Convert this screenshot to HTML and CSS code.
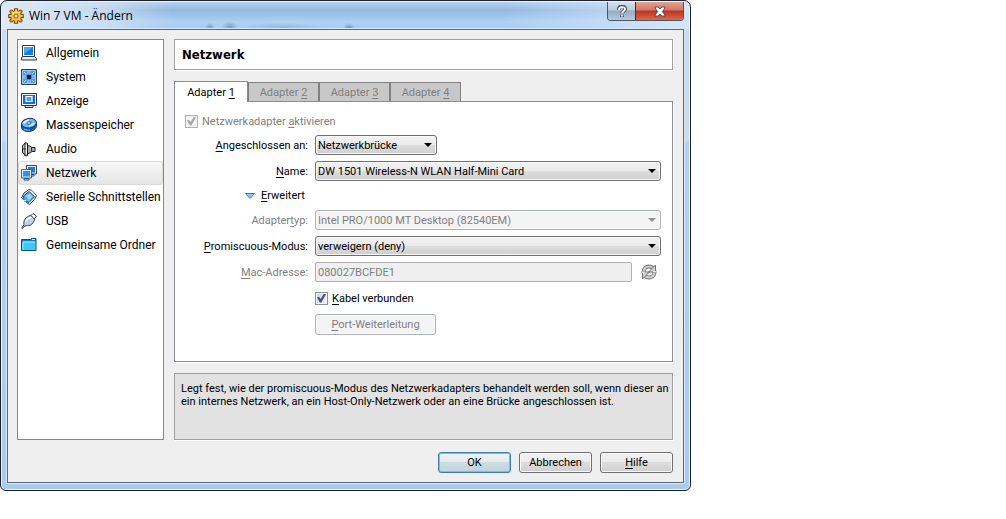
FILE: index.html
```html
<!DOCTYPE html>
<html lang="de">
<head>
<meta charset="utf-8">
<title>Win 7 VM - Ändern</title>
<link rel="stylesheet" href="styles.css">
</head>
<body>
<main class="window">
  <header class="titlebar">
    <svg class="icon" viewBox="0 0 16 16" aria-hidden="true">
      <path d="M8 1.6v12.8M1.6 8h12.8M3.5 3.5l9 9M12.500 3.500l-9 9" stroke="#6b4400" stroke-width="4" stroke-linecap="round"/>
      <circle cx="8" cy="8" r="5.600" fill="#6b4400"/>
      <path d="M8 1.600v12.800M1.600 8h12.800M3.500 3.500l9 9M12.500 3.500l-9 9" stroke="#f7b32d" stroke-width="2.200" stroke-linecap="round"/>
      <circle cx="8" cy="8" r="4.900" fill="#f9bd3c"/>
      <path d="M4.500 7a3.800 3.800 0 0 1 6-2.200" fill="none" stroke="#ffe79a" stroke-width="1.300"/>
      <circle cx="8" cy="8" r="2" fill="#dfe9f2" stroke="#8a5a08"/>
    </svg>
    <h1 class="title">Win 7 VM - Ändern</h1>
    <div class="caption-buttons">
      <button class="caption help" type="button" aria-label="Hilfe">
        <svg viewBox="0 0 12 14" aria-hidden="true"><path d="M2.500 5c0-4.500 7-4.500 7-.7C9.500 6.800 6 6.300 6 9M6 10.500v2.500" fill="none" stroke="#45506a" stroke-width="4"/><path d="M2.700 5c0-3.600 6.600-3.600 6.600-.6C9.300 6.800 6 6.500 6 9M6 10.700v1.700" fill="none" stroke="#fff" stroke-width="2"/></svg>
      </button>
      <button class="caption close" type="button" aria-label="Schließen">
        <svg viewBox="0 0 12 12" aria-hidden="true"><path d="M1 1.500h3.300L6 3.500l1.700-2H11v1L8.300 6 11 9.500v1H7.700L6 8.500l-1.700 2H1v-1L3.700 6 1 2.500z" fill="#fff" stroke="#5a4650"/></svg>
      </button>
    </div>
  </header>

  <div class="client">
    <nav class="sidebar">
      <a class="nav-item" href="#allgemein">
        <svg class="icon" viewBox="0 0 16 16" aria-hidden="true"><path d="M1.500.500h12v11h-12z" fill="#fff" stroke="#34363d"/><path d="M3 2h9v8H3z" fill="#137be4"/><path d="M3 2h9L3 9z" fill="#4aa5f5"/><path d="M1.500 11.500h12l2 2v1.500H.500v-2z" fill="#dadde2" stroke="#34363d"/><path d="M2 13h12" stroke="#fff"/></svg>
        Allgemein
      </a>
      <a class="nav-item" href="#system">
        <svg class="icon" viewBox="0 0 16 16" aria-hidden="true"><path d="M.500.500h15v15H.500z" fill="#4f9ce8" stroke="#343b48"/><path d="M1.500 1.500h13v13h-13z" fill="none" stroke="#9ccaf5"/><path d="M3 3l3 3M13 3l-3 3M3 13l3-3M13 13l-3-3M7 2.500v3M9 2.500v3M7 10.500v3M9 10.500v3M2.500 7h3M2.500 9h3M10.500 7h3M10.500 9h3" stroke="#f0f8ff" stroke-dasharray="1 1"/><path d="M5.500 5.500h5v5h-5z" fill="#2a6cb4"/><path d="M6 6h4v4H6z" fill="#061b38"/></svg>
        System
      </a>
      <a class="nav-item" href="#anzeige">
        <svg class="icon" viewBox="0 0 16 16" aria-hidden="true"><path d="M4 14.500h8v-2H4z" fill="#ddd" stroke="#34363d"/><path d="M.500.500h15v12H.500z" fill="#f6f6f6" stroke="#34363d"/><path d="M2 2h12v9H2z" fill="#1270d8"/><path d="M5 3.500h6v5H5z" fill="#4c9ff0" stroke="#fff" stroke-width="1.200"/></svg>
        Anzeige
      </a>
      <a class="nav-item" href="#massenspeicher">
        <svg class="icon" viewBox="0 0 16 16" aria-hidden="true"><path d="M.500 7v3c0 2.500 3 4.500 6.500 4.500 5 0 8.500-3 8.500-6V5.500z" fill="#0d62bd" stroke="#112c59"/><ellipse cx="8" cy="6.200" rx="7.500" ry="4.800" transform="rotate(-8 8 6)" fill="#6bb7f4" stroke="#163b70"/><path d="M1.500 6.500c1-2 4-4 6.500-4L8 6z" fill="#e2f3ff"/><path d="M8 6l6 0C13 8.500 10 9.500 8 9.500z" fill="#cdeaff"/><ellipse cx="8" cy="6" rx="2.200" ry="1.300" fill="#e9f5ff" stroke="#164d92"/><path d="M3 12c2 1.300 4 1.300 6 1" fill="none" stroke="#8ccaff"/></svg>
        Massenspeicher
      </a>
      <a class="nav-item" href="#audio">
        <svg class="icon" viewBox="0 0 16 16" aria-hidden="true"><path d="M6 4.500l3 .5 2 1.500h3v4h-3L9 12l-3 1z" fill="#aaa" stroke="#222"/><path d="M10.500 6.500v4" stroke="#333"/><path d="M1.500 5l3-3.500 2 1v12l-2 .5-3-4z" fill="#c9c9c9" stroke="#161616"/><path d="M4 2v13M1.500 8h4" stroke="#222"/><path d="M5.300 4v9" stroke="#fff"/></svg>
        Audio
      </a>
      <a class="nav-item selected" href="#netzwerk" aria-current="page">
        <svg class="icon" viewBox="0 0 16 16" aria-hidden="true"><path d="M8 9.500h5v1.500H8z" fill="#eee" stroke="#3d4654"/><path d="M5.500.500h10v8.500h-10z" fill="#e8f3ff" stroke="#3d4654"/><path d="M7 2h7v5.500H7z" fill="#2277cf"/><path d="M3 13.500h5v1.500H3z" fill="#eee" stroke="#3d4654"/><path d="M.500 4.500h10v8.500H.500z" fill="#e4f2ff" stroke="#3b68a0"/><path d="M2 6h7v5.500H2z" fill="#3a8de0"/></svg>
        Netzwerk
      </a>
      <a class="nav-item" href="#seriell">
        <svg class="icon" viewBox="0 0 16 16" aria-hidden="true"><path d="M3 4l5-3.500 3 1 4.500 5-2 4-5 5-3-2L.500 9z" fill="#e6eef5" stroke="#26384a"/><path d="M2.500 7L8 2.500l5.500 5L8 13.500 3 12z" fill="#56afe8" stroke="#24547f"/><path d="M5 7l4-2.500 2.500 3L8 11.500z" fill="#9bd8fb"/><path d="M1 11l4 1M10 1.500l4.500 5" stroke="#fff"/></svg>
        Serielle Schnittstellen
      </a>
      <a class="nav-item" href="#usb">
        <svg class="icon" viewBox="0 0 16 16" aria-hidden="true"><path d="M9.500 3L12 .500l3.500 2.500L13 6.500z" fill="#fff" stroke="#333a52"/><path d="M4 6c1.500-2 4-3.500 6-3.500L13.500 6c0 2.500-2 5-4 6-2 .8-4 .5-5.500 1L1 15.500.500 15 3 12c-.5-2 0-4.500 1-6z" fill="#c6cef0" stroke="#39415f"/><path d="M5 8c1-2 2.500-3 5-3.500" fill="none" stroke="#fff" stroke-width="1.500"/></svg>
        USB
      </a>
      <a class="nav-item" href="#ordner">
        <svg class="icon" viewBox="0 0 16 16" aria-hidden="true"><path d="M.500 2.500h9l1-1h4.500v12H.500z" fill="#0a83c4" stroke="#075277"/><path d="M1.500 4.500h13v8.500h-13z" fill="#40c8f2"/><path d="M2 5h12M2 5v8" stroke="#a4eeff"/><path d="M11 2.500h3" stroke="#d9f6ff"/></svg>
        Gemeinsame Ordner
      </a>
    </nav>

    <form class="content">
      <h2 class="page-title">Netzwerk</h2>

      <section class="tabs">
        <div class="tab-list" role="tablist">
          <button class="tab active" type="button" role="tab" aria-selected="true">Adapter <u>1</u></button>
          <button class="tab" type="button" role="tab" aria-selected="false">Adapter <u>2</u></button>
          <button class="tab" type="button" role="tab" aria-selected="false">Adapter <u>3</u></button>
          <button class="tab" type="button" role="tab" aria-selected="false">Adapter <u>4</u></button>
        </div>
        <div class="panel" role="tabpanel">
          <label class="check enable disabled"><input type="checkbox" checked disabled><span>Netzwerkadapter <u>a</u>ktivieren</span></label>

          <label class="label" for="attached"><u>A</u>ngeschlossen an:</label>
          <div class="combo short"><select id="attached"><option>Netzwerkbrücke</option></select></div>

          <label class="label" for="name"><u>N</u>ame:</label>
          <div class="combo"><select id="name"><option>DW 1501 Wireless-N WLAN Half-Mini Card</option></select></div>

          <button class="advanced" type="button"><svg viewBox="0 0 10 6" aria-hidden="true"><path d="M.500.500h9L5.500 5h-1z" fill="#8cc8f0" stroke="#3c7fb8"/></svg><span><u>E</u>rweitert</span></button>

          <label class="label disabled" for="type">Adapter<u>t</u>yp:</label>
          <div class="combo disabled"><select id="type" disabled><option>Intel PRO/1000 MT Desktop (82540EM)</option></select></div>

          <label class="label" for="promiscuous"><u>P</u>romiscuous-Modus:</label>
          <div class="combo"><select id="promiscuous"><option>verweigern (deny)</option></select></div>

          <label class="label disabled" for="mac"><u>M</u>ac-Adresse:</label>
          <div class="mac">
            <input class="text" id="mac" type="text" value="080027BCFDE1" disabled>
            <button class="refresh" type="button" disabled aria-label="Mac-Adresse erneuern">
              <svg class="icon" viewBox="0 0 16 16" aria-hidden="true"><circle cx="8" cy="8" r="5.500" fill="none" stroke="#707070" stroke-width="4"/><circle cx="8" cy="8" r="5.500" fill="none" stroke="#cfcfcf" stroke-width="2.200"/><path d="M14.500 1v7H7.500zM1.500 15V8h7z" fill="#d2d2d2" stroke="#707070"/><path d="M1 8.300h3M15 7.700h-3" stroke="#fff"/></svg>
            </button>
          </div>

          <label class="check field"><input type="checkbox" checked><span><u>K</u>abel verbunden</span></label>
          <button class="button forward field" type="button" disabled><u>P</u>ort-Weiterleitung</button>
        </div>
      </section>

      <p class="hint">Legt fest, wie der promiscuous-Modus des Netzwerkadapters behandelt werden soll, wenn dieser an ein internes Netzwerk, an ein Host-Only-Netzwerk oder an eine Brücke angeschlossen ist.</p>

      <footer class="actions">
        <button class="button default" type="button">OK</button>
        <button class="button" type="button">Abbrechen</button>
        <button class="button" type="button"><u>H</u>ilfe</button>
      </footer>
    </form>
  </div>
</main>
</body>
</html>
```
FILE: styles.css
```css
* { box-sizing: border-box; }

body {
  margin: 0;
  background: #fff;
  color: #000;
  font: 11px/13px Roboto, "Liberation Sans", sans-serif;
}

button, input, select { font: inherit; color: inherit; }
button { padding: 0; }
h1, h2, p { margin: 0; }
u { text-underline-offset: 2px; }

.icon { display: block; width: 16px; height: 16px; flex: none; }

.window {
  max-width: 691px;
  border: 1px solid #1c222c;
  border-radius: 7px 7px 6px 6px;
  padding: 0 6px 7px;
  background: linear-gradient(#c9dcf0 0, #c9dcf0 138px, #b2d3f4 142px, #aacbee 100%);
  box-shadow: inset 0 0 0 1px #e6f2fd;
}

.titlebar {
  display: flex;
  align-items: center;
  gap: 5px;
  height: 27px;
  margin: 1px -5px 0;
  padding: 0 5px 0 6px;
  border-radius: 6px 6px 0 0;
  background:
    radial-gradient(5px 4px at 208px 25px, #5d7f9c99, #5d7f9c00),
    radial-gradient(8px 6px at 228px 25px, #5d7f9c99, #5d7f9c00),
    radial-gradient(40px 4px at 280px 25px, #7f9fc066, #7f9fc000),
    radial-gradient(6px 5px at 347px 26px, #4d6f8c99, #4d6f8c00),
    linear-gradient(90deg, #dde9f5 0, #d2e2f3cc 100px, #d2e2f300 170px, #d2e2f300 500px, #d5e6f8 690px),
    linear-gradient(#b5d1ef 0, #92b9e0 8px, #9ec4eb 14px, #aed1f6 20px, #a8ccf1 100%);
}

.title {
  flex: 1;
  font: 12px/16px "Open Sans", "Noto Sans", sans-serif;
}

.caption-buttons {
  display: flex;
  align-self: flex-start;
  border: 1px solid #4a5666;
  border-top: 0;
  border-radius: 0 0 4px 4px;
  overflow: hidden;
}

.caption {
  display: grid;
  place-items: center;
  height: 18px;
  border: 0;
}

.caption svg { width: 12px; height: 13px; }

.help {
  width: 27px;
  background: linear-gradient(#d5e0ec 0, #bccbdc 45%, #97abc2 50%, #b5cade 100%);
}

.close {
  width: 48px;
  border-left: 1px solid #54232a;
  background: linear-gradient(#e2a397 0, #d27567 45%, #bc3420 50%, #d9694a 100%);
}

.client {
  display: flex;
  gap: 10px;
  padding: 9px 10px 9px 9px;
  border: 1px solid #56687c;
  background: #efefef;
  box-shadow: 0 0 0 1px #d8eafa;
}

.sidebar {
  flex: none;
  width: 147px;
  padding: 1px 0;
  border: 1px solid #828790;
  margin-bottom: 33px;
  background: #fff;
  font-size: 12px;
  line-height: 16px;
}

.nav-item {
  display: flex;
  align-items: center;
  gap: 9px;
  height: 24px;
  padding: 0 2px;
  border: 1px solid transparent;
  border-radius: 3px;
  color: #000;
  text-decoration: none;
  white-space: nowrap;
}

.selected {
  border-color: #d9d9d9;
  background: linear-gradient(#f8f8f8, #e5e5e5);
}

.content { flex: 1; min-width: 0; }

.page-title {
  padding: 7px;
  border: 1px solid #a0a0a0;
  background: #fff;
  font: bold 13px/15px "DejaVu Sans Condensed", "DejaVu Sans", sans-serif;
  box-shadow: 1px 1px #fff;
}

.tabs { margin-top: 11px; }

.tab-list { display: flex; align-items: flex-end; }

.tab {
  width: 71px;
  height: 19px;
  border: 1px solid #808080;
  border-bottom: 0;
  background: #c8c8c8;
  color: #808080;
}

.tab.active {
  position: relative;
  width: 74px;
  height: 21px;
  margin-bottom: -1px;
  border-color: #898c95;
  background: #fff;
  color: #000;
}

.panel {
  display: grid;
  grid-template-columns: 123px 1fr;
  grid-template-rows: 16px 20px 20px 17px repeat(5, 20px);
  gap: 6px 7px;
  align-items: center;
  padding: 11px 11px 27px 10px;
  border: 1px solid #898c95;
  background: #fff;
  box-shadow: 1px 1px #fff;
}

.label { justify-self: end; white-space: nowrap; }
.disabled { color: #808080; }

.check { display: flex; align-items: center; gap: 4px; }
.enable { grid-column: 1 / -1; }
.field { grid-column: 2; justify-self: start; }

.check input {
  display: grid;
  place-items: center;
  appearance: none;
  width: 13px;
  height: 13px;
  margin: 0;
  border: 1px solid #8e8f8f;
  background: linear-gradient(135deg, #cbcfd5, #f6f6f6);
  outline: 1px solid #f4f4f4;
  outline-offset: -2px;
}

.check input::before {
  content: "";
  width: 9px;
  height: 9px;
  background: #40528f;
  clip-path: polygon(0 45%, 22% 35%, 40% 62%, 78% 0, 100% 8%, 48% 100%, 32% 100%);
}

.check input:disabled { border-color: #b1b1b1; background: #f4f4f4; }
.check input:disabled::before { background: #a6a6a6; }

.combo { display: grid; position: relative; }
.short { width: 122px; }

.combo select {
  appearance: none;
  width: 100%;
  height: 20px;
  padding: 0 20px 0 2px;
  border: 1px solid #707070;
  border-radius: 3px;
  background: linear-gradient(#f2f2f2 0, #ebebeb 49%, #dddddd 50%, #cfcfcf 100%);
  box-shadow: inset 0 0 0 1px #fafafa;
}

.combo::after {
  content: "";
  position: absolute;
  top: 8px;
  right: 5px;
  width: 8px;
  height: 4px;
  background: #000;
  clip-path: polygon(0 0, 100% 0, 50% 100%);
}

.combo select:disabled {
  border-color: #adb2b5;
  background: #f4f4f4;
  color: #808080;
  opacity: 1;
}

.combo.disabled::after { background: #909090; }

.advanced {
  display: flex;
  align-items: center;
  grid-column: 1 / -1;
  justify-self: start;
  gap: 6px;
  margin-left: 60px;
  border: 0;
  background: none;
}

.advanced svg { width: 10px; height: 6px; }

.mac { display: flex; align-items: center; gap: 9px; padding-right: 4px; }

.text {
  flex: 1;
  min-width: 0;
  height: 20px;
  padding: 0 2px;
  border: 1px solid #afafaf;
  border-radius: 2px;
  background: #efefef;
  color: #808080;
}

.refresh { border: 0; background: none; }

.button {
  width: 73px;
  height: 21px;
  border: 1px solid #707070;
  border-radius: 3px;
  background: linear-gradient(#f2f2f2 0, #ebebeb 49%, #dddddd 50%, #cfcfcf 100%);
  box-shadow: inset 0 0 0 1px #fafafa;
}

.button:disabled {
  border-color: #adb2b5;
  background: #f4f4f4;
  color: #808080;
}

.forward { width: 121px; }

.default {
  border-color: #3c7fb1;
  background: linear-gradient(#eef4f6 0, #e2ebef 49%, #cfdde3 50%, #c0d3dc 100%);
  box-shadow: inset 0 0 0 1px #48d2f8;
}

.hint {
  min-height: 67px;
  margin-top: 11px;
  padding: 8px 2px 8px 6px;
  border: 1px solid #a0a0a0;
  background: #e2e2e2;
  box-shadow: 1px 1px #fff;
}

.actions {
  display: flex;
  justify-content: flex-end;
  gap: 8px;
  margin-top: 12px;
}
```
